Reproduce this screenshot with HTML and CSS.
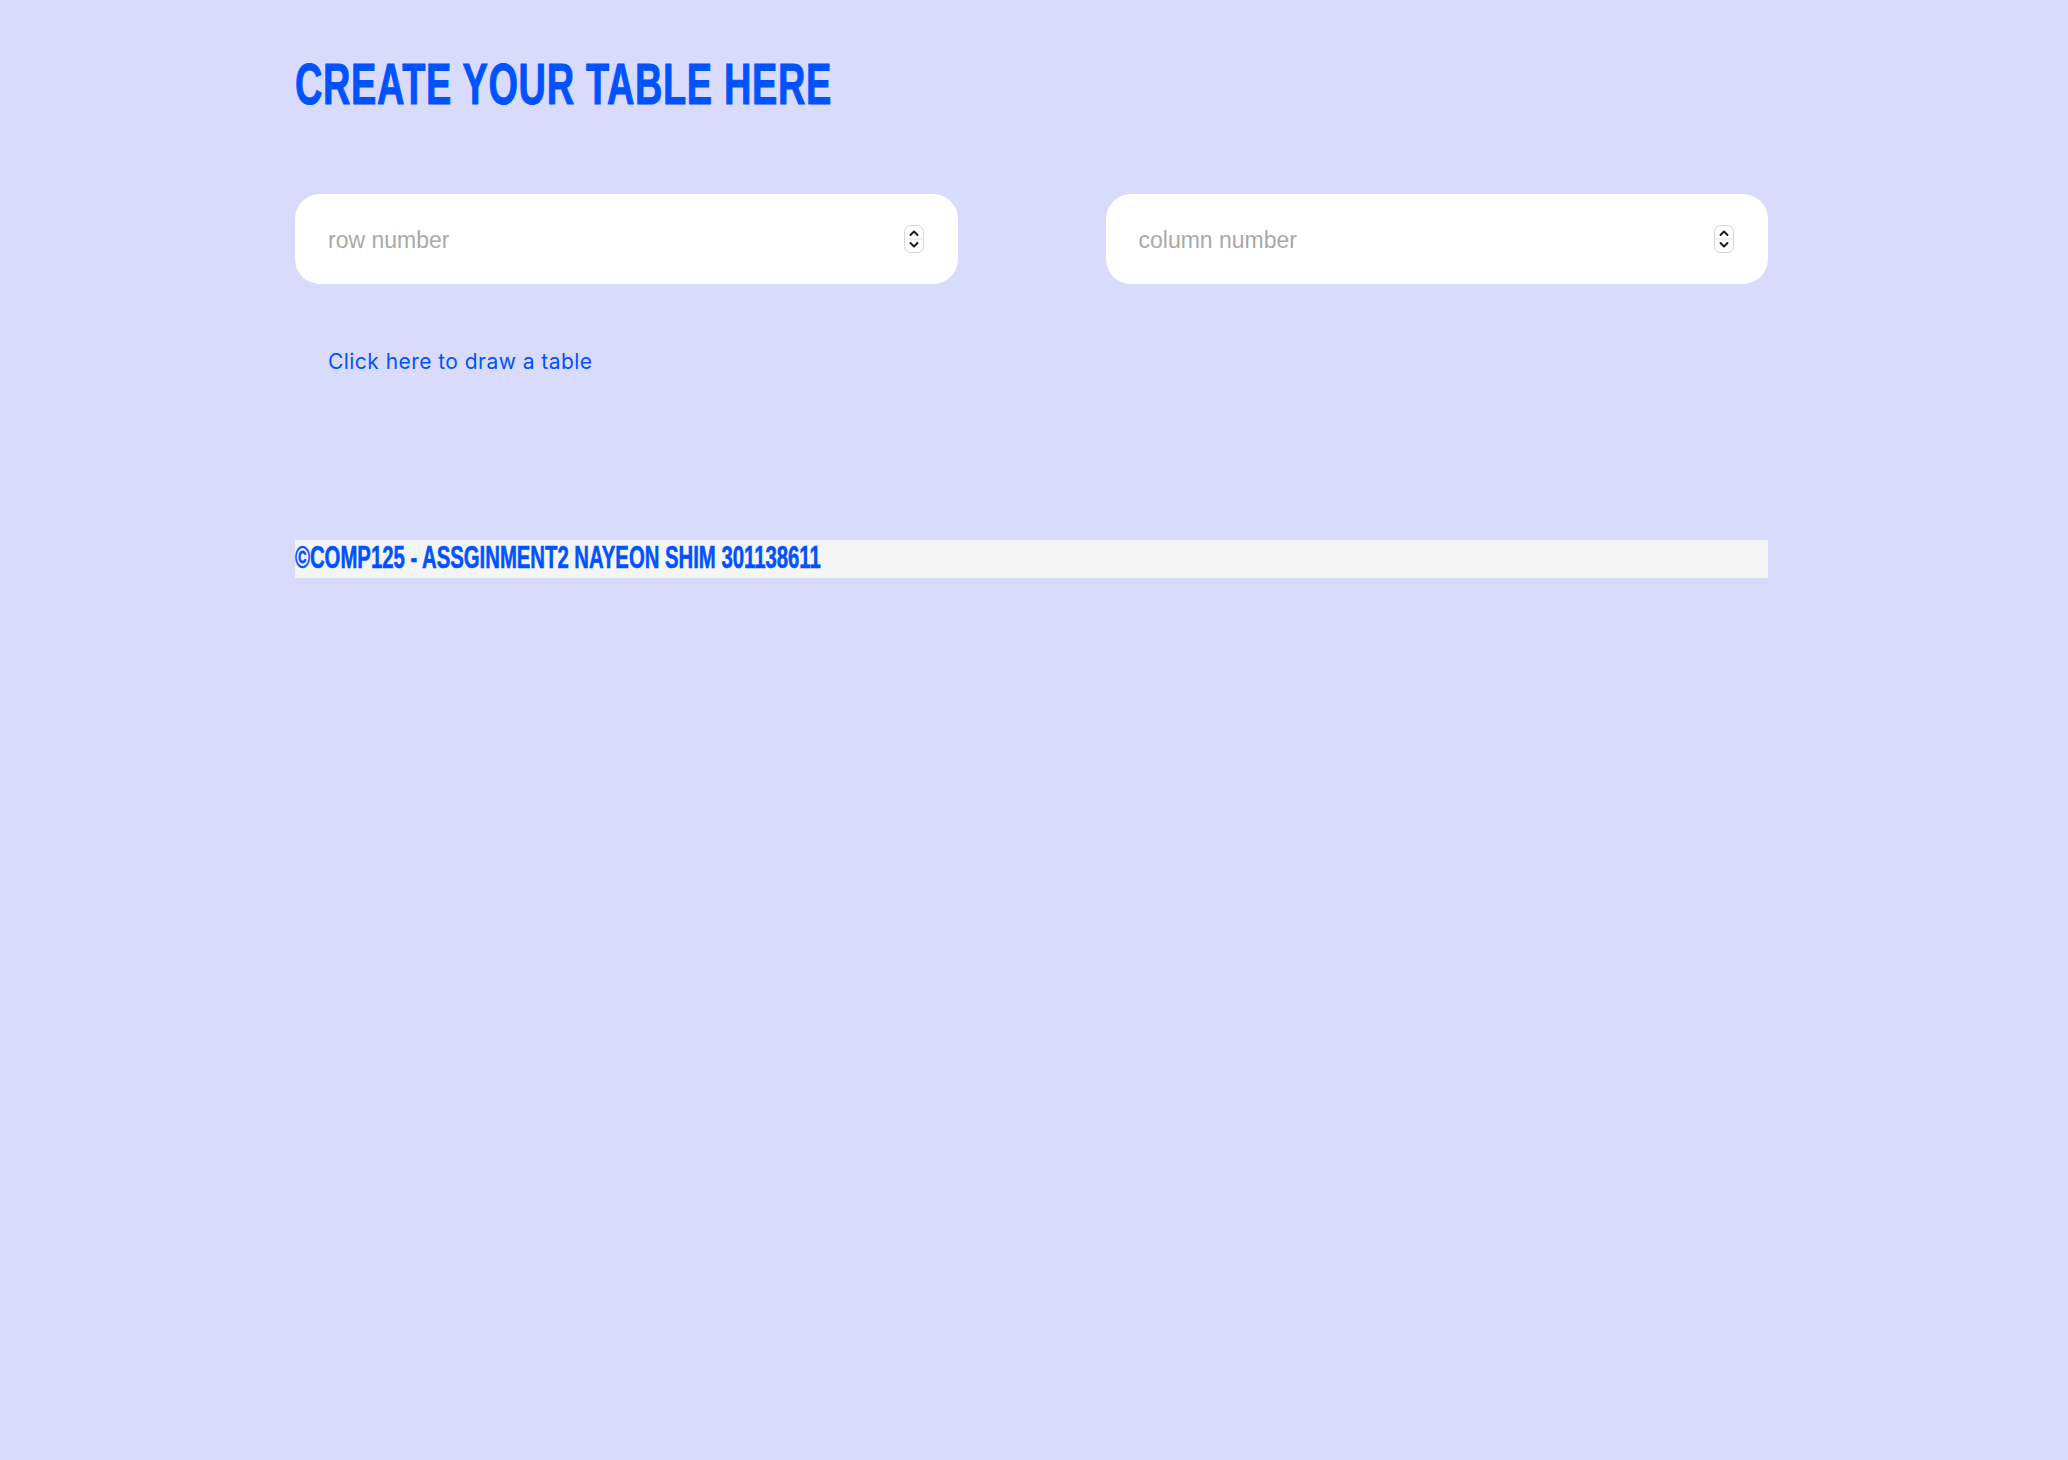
FILE: index.html
```html
<!DOCTYPE html>
<html lang="en">
<head>
<meta charset="utf-8">
<title>Create your table</title>
<link rel="stylesheet" href="styles.css">
</head>
<body>
<main class="page">
  <h1 class="title"><span class="condensed">Create your table here</span></h1>
  <div class="fields">
    <label class="field">
      <input class="field-input" type="number" placeholder="row number">
      <svg class="spinner" width="20" height="28" viewBox="0 0 20 28" aria-hidden="true">
        <rect x="0.5" y="0.5" width="19" height="27" rx="6" fill="#fff" stroke="#d6d6d6"/>
        <line x1="1" y1="14" x2="19" y2="14" stroke="#e2e2e2"/>
        <polyline points="6.5,10 10,6.5 13.5,10" fill="none" stroke="#1e1e1e" stroke-width="2" stroke-linecap="round" stroke-linejoin="round"/>
        <polyline points="6.5,18 10,21.5 13.5,18" fill="none" stroke="#1e1e1e" stroke-width="2" stroke-linecap="round" stroke-linejoin="round"/>
      </svg>
    </label>
    <label class="field">
      <input class="field-input" type="number" placeholder="column number">
      <svg class="spinner" width="20" height="28" viewBox="0 0 20 28" aria-hidden="true">
        <rect x="0.5" y="0.5" width="19" height="27" rx="6" fill="#fff" stroke="#d6d6d6"/>
        <line x1="1" y1="14" x2="19" y2="14" stroke="#e2e2e2"/>
        <polyline points="6.5,10 10,6.5 13.5,10" fill="none" stroke="#1e1e1e" stroke-width="2" stroke-linecap="round" stroke-linejoin="round"/>
        <polyline points="6.5,18 10,21.5 13.5,18" fill="none" stroke="#1e1e1e" stroke-width="2" stroke-linecap="round" stroke-linejoin="round"/>
      </svg>
    </label>
  </div>
  <a class="draw-link" href="#">Click here to draw a table</a>
  <footer class="footer"><span class="condensed">©COMP125 - ASSGINMENT2 NAYEON SHIM 301138611</span></footer>
</main>
</body>
</html>
```
FILE: styles.css
```css
html, body {
  margin: 0;
  padding: 0;
}

body {
  background: #d9dbfc;
  min-height: 1460px;
  font-family: "Liberation Sans", Arial, sans-serif;
}

.page {
  width: 1473px;
  margin-left: 295px;
  padding-top: 56px;
  display: flex;
  flex-direction: column;
  align-items: flex-start;
}

.condensed {
  display: inline-block;
  transform-origin: left center;
  white-space: nowrap;
}

.title {
  margin: 0;
  font-family: "Liberation Sans", Arial, sans-serif;
  font-weight: 700;
  font-size: 57px;
  line-height: 57px;
  text-transform: uppercase;
  color: #0052ff;
  letter-spacing: 1px;
  -webkit-text-stroke: 1px #0052ff;
}

.title .condensed {
  transform: scaleX(0.665);
}

.fields {
  align-self: stretch;
  margin-top: 81px;
  display: grid;
  grid-template-columns: 1fr 1fr;
  column-gap: 148px;
}

.field {
  height: 90px;
  box-sizing: border-box;
  background: #ffffff;
  border-radius: 25px;
  padding: 0 34px 0 33px;
  display: flex;
  align-items: center;
  gap: 12px;
}

.field-input {
  flex: 1;
  min-width: 0;
  border: none;
  outline: none;
  background: transparent;
  padding: 0;
  margin: 2px 0 0 0;
  font-family: "Liberation Sans", Arial, sans-serif;
  font-size: 23px;
  color: #333;
  -moz-appearance: textfield;
}

.field-input::placeholder {
  color: #a9a9a9;
}

.field-input::-webkit-inner-spin-button,
.field-input::-webkit-outer-spin-button {
  -webkit-appearance: none;
  margin: 0;
}

.spinner {
  flex: none;
  display: block;
}

.draw-link {
  margin-top: 66px;
  margin-left: 33px;
  font-family: Inter, "Noto Sans", sans-serif;
  font-size: 21px;
  line-height: 24px;
  letter-spacing: 0.45px;
  color: #0052ff;
  text-decoration: none;
}

.footer {
  align-self: stretch;
  margin-top: 166px;
  height: 38px;
  box-sizing: border-box;
  padding-bottom: 3px;
  background: #f5f5f5;
  font-family: "Liberation Sans", Arial, sans-serif;
  font-weight: 700;
  font-size: 31px;
  line-height: 35px;
  color: #0052ff;
  -webkit-text-stroke: 0.6px #0052ff;
}

.footer .condensed {
  transform: scaleX(0.655);
}
```
